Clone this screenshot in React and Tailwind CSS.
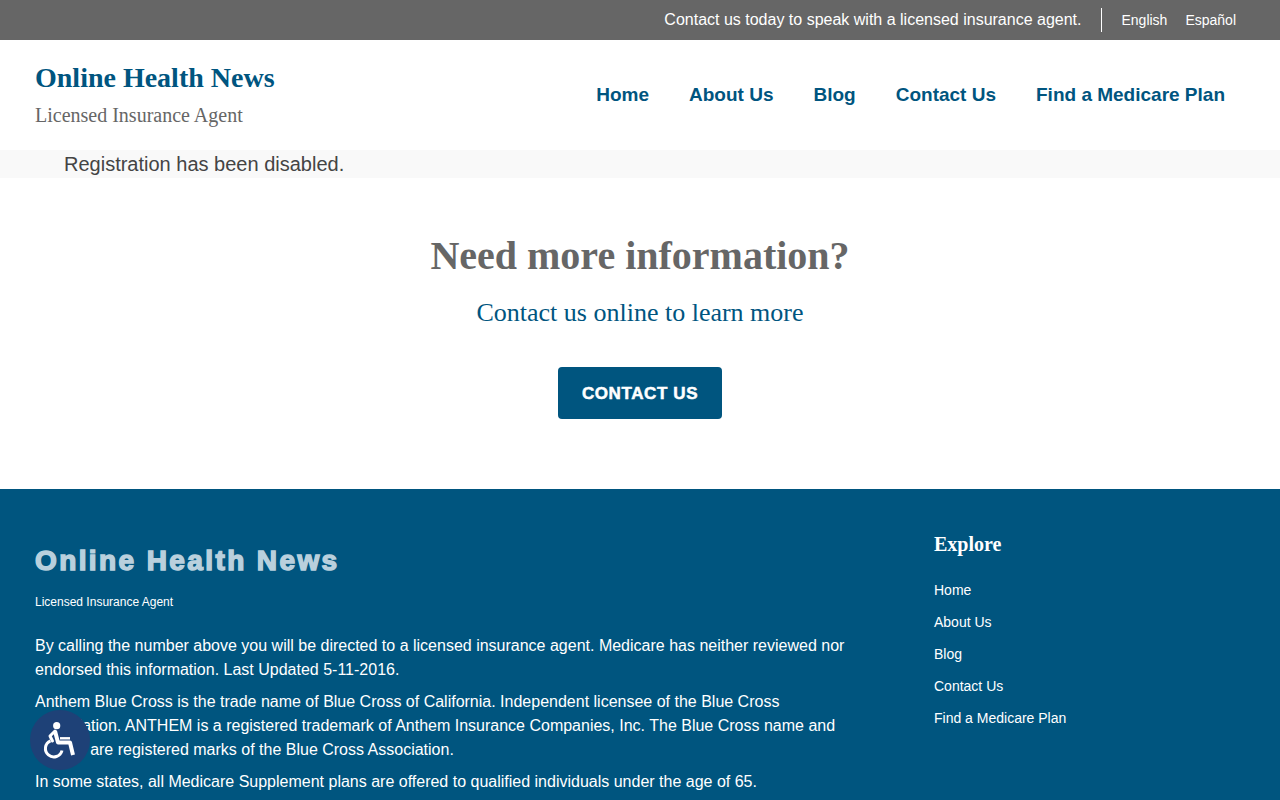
import React from 'react'

const navLinks = ['Home', 'About Us', 'Blog', 'Contact Us', 'Find a Medicare Plan']

function WheelchairIcon() {
  return (
    <svg viewBox="0 0 60 60" className="w-[60px] h-[60px]" fill="none" stroke="#fff">
      <circle cx="26.7" cy="15.7" r="3.6" fill="#fff" stroke="none" />
      <path d="M25 21 L28 32.5 L40 32.5 L43 45" strokeWidth="4" strokeLinejoin="round" />
      <path d="M30 28.3 L40 28.3" strokeWidth="2.4" />
      <path d="M20.5 30.8 A8.4 8.4 0 1 0 32 40.5" strokeWidth="3" />
      <path d="M25 21 L20 26 L22.5 31" strokeWidth="3" strokeLinecap="round" strokeLinejoin="round" />
    </svg>
  )
}

export default function App() {
  return (
    <div className="relative h-[800px] overflow-hidden bg-white font-['Liberation_Sans',Arial,sans-serif]">
      <div className="h-10 bg-[#666666] flex items-center justify-end pr-[44px] text-white">
        <span className="text-base">Contact us today to speak with a licensed insurance agent.</span>
        <span className="w-px h-6 bg-white ml-5 mr-[19px]"></span>
        <a className="text-sm">English</a>
        <a className="text-sm ml-[18px]">Español</a>
      </div>

      <header className="h-[110px] flex items-center justify-between pl-[35px] pr-[55px]">
        <div className="font-['Liberation_Serif',serif] pb-[2px]">
          <div className="text-[28px] leading-[32px] font-bold text-[#00557f] mb-[9px]">Online Health News</div>
          <div className="text-xl leading-6 text-[#666666]">Licensed Insurance Agent</div>
        </div>
        <nav className="flex gap-10">
          {navLinks.map((link) => (
            <a key={link} className="text-[19px] font-bold text-[#00557f]">{link}</a>
          ))}
        </nav>
      </header>

      <div className="h-[28px] bg-[#f9f9f9] pl-16 text-xl leading-[28px] text-[#444444]">
        Registration has been disabled.
      </div>

      <section className="h-[311px] pt-[56px] flex flex-col items-center">
        <h2 className="font-['Liberation_Serif',serif] text-[40px] leading-[44px] font-bold text-[#666666]">Need more information?</h2>
        <p className="font-['Liberation_Serif',serif] text-[26px] leading-[30px] text-[#00557f] mt-[20px]">Contact us online to learn more</p>
        <a className="mt-[39px] w-[164px] h-[52px] pt-[1px] bg-[#00557f] rounded flex items-center justify-center text-white font-bold text-[17px] tracking-[0.6px] [-webkit-text-stroke:0.5px_#ffffff]">CONTACT US</a>
      </section>

      <footer className="h-[311px] bg-[#00557f] pl-[35px] pt-[50px] flex text-white">
        <div className="w-[899px] pr-[75px]">
          <div className="pt-[1px] -mb-[1px] text-[28px] leading-[42px] font-bold text-[#b9d0dd] tracking-[2.4px] [-webkit-text-stroke:1.5px_#b9d0dd]">Online Health News</div>
          <div className="text-xs mt-[13px] mb-[24px]">Licensed Insurance Agent</div>
          <p className="text-base leading-6 mb-2">By calling the number above you will be directed to a licensed insurance agent. Medicare has neither reviewed nor endorsed this information. Last Updated 5-11-2016.</p>
          <p className="text-base leading-6 mb-2">Anthem Blue Cross is the trade name of Blue Cross of California. Independent licensee of the Blue Cross Association. ANTHEM is a registered trademark of Anthem Insurance Companies, Inc. The Blue Cross name and symbol are registered marks of the Blue Cross Association.</p>
          <p className="text-base leading-6">In some states, all Medicare Supplement plans are offered to qualified individuals under the age of 65.</p>
        </div>
        <div>
          <div className="font-['Liberation_Serif',serif] text-xl leading-6 font-bold mb-[22px] -mt-[7px]">Explore</div>
          <ul className="flex flex-col gap-2 text-sm leading-6">
            {navLinks.map((link) => (
              <li key={link}>{link}</li>
            ))}
          </ul>
        </div>
      </footer>

      <div className="absolute left-[30px] top-[710px] w-[60px] h-[60px] rounded-full bg-[#1e4177]">
        <WheelchairIcon />
      </div>
    </div>
  )
}
